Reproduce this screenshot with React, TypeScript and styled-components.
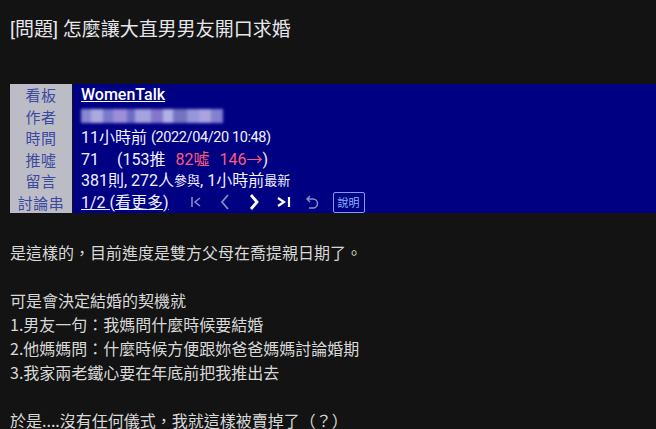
import styled, { createGlobalStyle } from "styled-components";

const GlobalStyle = createGlobalStyle`
  html, body {
    margin: 0;
    padding: 0;
    background: #131313;
    overflow: hidden;
  }
  body {
    font-family: "Roboto", "Noto Sans CJK TC", "Noto Sans", sans-serif;
  }
`;

const Page = styled.div`
  width: 656px;
  height: 429px;
  background: #131313;
  padding-left: 10px;
  box-sizing: border-box;
`;

const Title = styled.h1`
  margin: 0;
  padding-top: 17px;
  font-size: 19px;
  line-height: 26px;
  font-weight: 400;
  color: #e6e6ea;
  white-space: nowrap;
`;

const Meta = styled.div`
  margin-top: 41px;
  display: grid;
  grid-template-columns: 62px 1fr;
  column-gap: 1px;
  grid-auto-rows: 21.5px;
`;

const Label = styled.div`
  background: #bcbcc6;
  color: #3c4a9e;
  font-family: "Noto Sans CJK TC", sans-serif;
  font-size: 15px;
  line-height: 21.5px;
  text-align: center;
  letter-spacing: 0.5px;
`;

const Value = styled.div`
  background: #000083;
  color: #f0f0ff;
  font-size: 16px;
  line-height: 21.5px;
  padding-left: 8px;
  display: flex;
  align-items: center;
  white-space: nowrap;
`;

const BoardLink = styled.span`
  text-decoration: underline;
  font-weight: 500;
  color: #ffffff;
`;

const Blurred = styled.div`
  width: 142px;
  height: 14px;
  display: flex;
  filter: blur(1.5px);
  opacity: 0.85;
`;

const BlurBlock = styled.span<{ $c: string; $w: number }>`
  width: ${(p) => p.$w}px;
  height: 100%;
  background: ${(p) => p.$c};
`;

const Date = styled.span`
  font-size: 14.5px;
  letter-spacing: -0.4px;
  margin-left: 4px;
`;

const Red = styled.span`
  color: #ff5a78;
`;

const Small = styled.span`
  font-size: 13px;
`;

const Gap = styled.span<{ $w: number }>`
  display: inline-block;
  width: ${(p) => p.$w}px;
`;

const Under = styled.span`
  text-decoration: underline;
`;

const Nav = styled.div`
  display: flex;
  align-items: center;
  margin-left: 20px;
`;

const NavBtn = styled.span<{ $on?: boolean }>`
  width: 29px;
  height: 21px;
  display: flex;
  align-items: center;
  justify-content: flex-start;
  color: ${(p) => (p.$on ? "#ffffff" : "#8a8ac4")};
`;

const HelpBtn = styled.span`
  margin-left: -1px;
  border: 1px solid #7a9cff;
  border-radius: 2px;
  color: #8ab0ff;
  font-family: "Noto Sans CJK TC", sans-serif;
  font-size: 11px;
  line-height: 19px;
  padding: 0 4px;
`;

const Body = styled.div`
  margin-top: 27px;
  font-family: "Noto Sans CJK TC", sans-serif;
  font-size: 16px;
  line-height: 24px;
  color: #d8d8d8;
  white-space: pre;
`;

const blur: [string, number][] = [
  ["#a0a0e0", 10],
  ["#c8c8f0", 12],
  ["#9090d8", 10],
  ["#b8a8e8", 14],
  ["#8080d0", 8],
  ["#c0c0f0", 16],
  ["#9c8cd8", 12],
  ["#d0d0f8", 10],
  ["#8888cc", 14],
  ["#b0b0e8", 12],
  ["#c8c0f0", 12],
  ["#9898dc", 12],
];

export default function App() {
  return (
    <>
      <GlobalStyle />
      <Page>
        <Title>[問題] 怎麼讓大直男男友開口求婚</Title>
        <Meta>
          <Label>看板</Label>
          <Value>
            <BoardLink>WomenTalk</BoardLink>
          </Value>
          <Label>作者</Label>
          <Value>
            <Blurred>
              {blur.map(([c, w], i) => (
                <BlurBlock key={i} $c={c} $w={w} />
              ))}
            </Blurred>
          </Value>
          <Label>時間</Label>
          <Value>
            11小時前<Date>(2022/04/20 10:48)</Date>
          </Value>
          <Label>推噓</Label>
          <Value>
            71<Gap $w={18} />(153推<Gap $w={10} />
            <Red>82噓</Red>
            <Gap $w={10} />
            <Red>146→</Red>)
          </Value>
          <Label>留言</Label>
          <Value>
            381則, 272人<Small>參與</Small>, 1小時前<Small>最新</Small>
          </Value>
          <Label>討論串</Label>
          <Value>
            <Under>1/2 (看更多)</Under>
            <Nav>
              <NavBtn>
                <svg width="14" height="14" viewBox="0 0 14 14" fill="none" stroke="currentColor" strokeWidth="1.6">
                  <path d="M3 2v10M11 3L6 7l5 4" />
                </svg>
              </NavBtn>
              <NavBtn>
                <svg width="14" height="18" viewBox="0 0 14 18" fill="none" stroke="currentColor" strokeWidth="1.8">
                  <path d="M10 2L4 9l6 7" />
                </svg>
              </NavBtn>
              <NavBtn $on>
                <svg width="14" height="18" viewBox="0 0 14 18" fill="none" stroke="currentColor" strokeWidth="2.8">
                  <path d="M4 2l6 7-6 7" />
                </svg>
              </NavBtn>
              <NavBtn $on>
                <svg width="16" height="14" viewBox="0 0 16 14" fill="none" stroke="currentColor" strokeWidth="2.2">
                  <path d="M2 3l6 4-6 4M13 2v10" />
                </svg>
              </NavBtn>
              <NavBtn>
                <svg width="14" height="18" viewBox="0 0 14 18" fill="none" stroke="currentColor" strokeWidth="1.5">
                  <path d="M5 3L2 6l3 3M2 6h6a4.5 4.5 0 0 1 0 9H4" />
                </svg>
              </NavBtn>
              <HelpBtn>說明</HelpBtn>
            </Nav>
          </Value>
        </Meta>
        <Body>
          {`是這樣的，目前進度是雙方父母在喬提親日期了。

可是會決定結婚的契機就
1.男友一句：我媽問什麼時候要結婚
2.他媽媽問：什麼時候方便跟妳爸爸媽媽討論婚期
3.我家兩老鐵心要在年底前把我推出去

於是....沒有任何儀式，我就這樣被賣掉了（？）`}
        </Body>
      </Page>
    </>
  );
}
